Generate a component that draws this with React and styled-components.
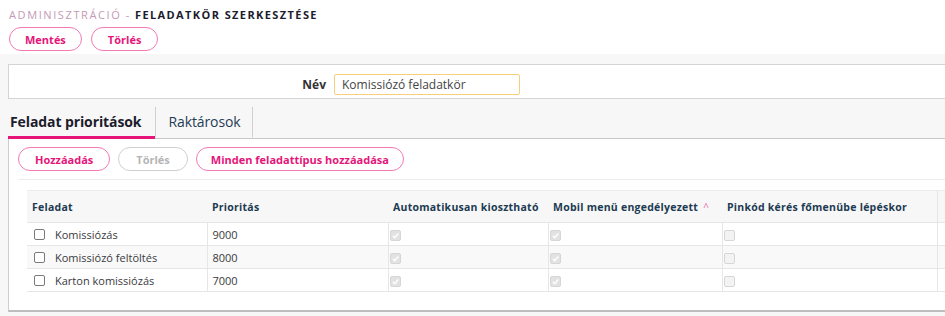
import React from 'react';
import styled, { createGlobalStyle } from 'styled-components';

const GlobalStyle = createGlobalStyle`
  body {
    margin: 0;
    background: #f7f7f7;
    font-family: "Open Sans", "Noto Sans", sans-serif;
    overflow: hidden;
  }
`;

const PINK = '#e5157a';

const Top = styled.header`
  background: #fff;
  height: 54px;
  box-sizing: border-box;
  padding: 8px 9px 0;
`;

const Title = styled.div`
  font-size: 11px;
  line-height: 14px;
  letter-spacing: 1.6px;
  text-transform: uppercase;
  color: #c49ab4;
  white-space: nowrap;
  b {
    color: #1c1c2c;
    font-weight: 700;
    margin-left: 4px;
    letter-spacing: 1.4px;
  }
`;

const ButtonRow = styled.div`
  display: flex;
  gap: ${p => p.$gap ?? 9}px;
  margin-top: ${p => p.$top ?? 5}px;
`;

const PillButton = styled.button`
  height: 24px;
  box-sizing: border-box;
  padding: 0 ${p => p.$pad || 15}px;
  border-radius: 12px;
  border: 1.5px solid ${p => (p.disabled ? '#cfcfcf' : '#f27ab3')};
  background: #fff;
  color: ${p => (p.disabled ? '#b5b5b5' : PINK)};
  font-family: inherit;
  font-size: 11px;
  font-weight: 700;
  cursor: pointer;
`;

const Main = styled.main`
  padding: 10px 0 0 8px;
  margin-right: -30px;
`;

const NamePanel = styled.section`
  background: #fff;
  border: 1px solid #d4d4d4;
  height: 35px;
  box-sizing: border-box;
  padding-top: 9px;
  display: grid;
  grid-template-columns: 317px 186px;
  column-gap: 8px;
  align-items: start;
`;

const Label = styled.label`
  text-align: right;
  font-size: 12px;
  line-height: 21px;
  font-weight: 700;
  color: #333;
`;

const Input = styled.input`
  height: 21px;
  box-sizing: border-box;
  border: 1px solid #f8cf7a;
  border-radius: 2px;
  padding: 0 7px;
  font-family: inherit;
  font-size: 12px;
  color: #444;
  outline: none;
`;

const Tabs = styled.nav`
  display: flex;
  align-items: flex-end;
  height: 39px;
  border-bottom: 1px solid #c8c8c8;
`;

const Tab = styled.div`
  display: flex;
  align-items: center;
  height: 25px;
  margin-bottom: -1px;
  padding: 2px ${p => (p.$first ? 14 : 11)}px 2px ${p => (p.$first ? 2 : 12)}px;
  font-size: 14px;
  letter-spacing: -0.1px;
  font-weight: ${p => (p.$active ? 700 : 400)};
  color: ${p => (p.$active ? '#1c1c2c' : '#1f3d55')};
  border-bottom: 3px solid ${p => (p.$active ? PINK : 'transparent')};
  & + & {
    border-left: 1px solid #cfcfcf;
  }
  &:last-child {
    border-right: 1px solid #cfcfcf;
  }
`;

const Content = styled.section`
  background: #fff;
  border: 1px solid #cdcdcd;
  border-top: none;
  border-bottom: 2px solid #bdbdbd;
  padding: 8px 0 18px 9px;
`;

const Rule = styled.hr`
  border: none;
  border-top: 1px solid #ececec;
  margin: 8px 0 10px;
`;

const Table = styled.table`
  margin-left: 9px;
  border-collapse: collapse;
  table-layout: fixed;
  width: 1010px;
  border-top: 1px solid #ececec;
`;

const Th = styled.th`
  height: 31px;
  background: #f7f7f7;
  text-align: left;
  padding: 0 5px;
  font-size: 10.5px;
  font-weight: 700;
  letter-spacing: 0.25px;
  color: #1d3b52;
  white-space: nowrap;
  border-bottom: 1px solid #e6e6e6;
  & + &:last-child {
    border-left: 1px solid #e6e6e6;
  }
`;

const Caret = styled.span`
  color: #f06aa5;
  font-weight: 400;
  margin-left: 5px;
  font-size: 10px;
`;

const Tr = styled.tr`
  background: ${p => (p.$alt ? '#f9f9f9' : '#fff')};
`;

const Td = styled.td`
  height: 22px;
  padding: 0 ${p => (p.$box ? 1 : 5)}px;
  font-size: 11px;
  color: #3a3a40;
  border-bottom: 1px solid #e6e6e6;
  & + & {
    border-left: 1px solid #e6e6e6;
  }
`;

const Cell = styled.div`
  display: flex;
  align-items: center;
  gap: 10px;
  padding-left: 2px;
`;

const Box = styled.span`
  display: inline-flex;
  align-items: center;
  justify-content: center;
  width: 11px;
  height: 11px;
  box-sizing: border-box;
  border-radius: 2px;
  vertical-align: middle;
  border: 1px solid ${p => (p.$muted ? '#d6d6d6' : '#7a7a7a')};
  background: ${p => (p.$muted ? (p.$checked ? '#e2e2e2' : '#f3f3f3') : '#fff')};
`;

const Check = ({ checked, muted }) => (
  <Box $checked={checked} $muted={muted}>
    {checked && (
      <svg width="9" height="9" viewBox="0 0 10 10">
        <path d="M2 5.2 L4.2 7.4 L8 2.8" fill="none" stroke="#fff" strokeWidth="1.6" />
      </svg>
    )}
  </Box>
);

const rows = [
  { name: 'Komissiózás', prio: 9000 },
  { name: 'Komissiózó feltöltés', prio: 8000 },
  { name: 'Karton komissiózás', prio: 7000 },
];

export default function App() {
  return (
    <>
      <GlobalStyle />
      <Top>
        <Title>
          Adminisztráció -<b>Feladatkör szerkesztése</b>
        </Title>
        <ButtonRow>
          <PillButton $pad={15}>Mentés</PillButton>
          <PillButton $pad={16}>Törlés</PillButton>
        </ButtonRow>
      </Top>
      <Main>
        <NamePanel>
          <Label>Név</Label>
          <Input defaultValue="Komissiózó feladatkör" />
        </NamePanel>
        <Tabs>
          <Tab $first $active>Feladat prioritások</Tab>
          <Tab>Raktárosok</Tab>
        </Tabs>
        <Content>
          <ButtonRow $gap={8} $top={0}>
            <PillButton $pad={16}>Hozzáadás</PillButton>
            <PillButton $pad={17} disabled>Törlés</PillButton>
            <PillButton $pad={14}>Minden feladattípus hozzáadása</PillButton>
          </ButtonRow>
          <Rule />
          <Table>
            <colgroup>
              <col style={{ width: 180 }} />
              <col style={{ width: 181 }} />
              <col style={{ width: 160 }} />
              <col style={{ width: 174 }} />
              <col style={{ width: 215 }} />
              <col />
            </colgroup>
            <thead>
              <tr>
                <Th>Feladat</Th>
                <Th>Prioritás</Th>
                <Th>Automatikusan kiosztható</Th>
                <Th>
                  Mobil menü engedélyezett<Caret>^</Caret>
                </Th>
                <Th>Pinkód kérés főmenübe lépéskor</Th>
                <Th />
              </tr>
            </thead>
            <tbody>
              {rows.map((r, i) => (
                <Tr key={r.name} $alt={i === 1}>
                  <Td>
                    <Cell>
                      <Check />
                      {r.name}
                    </Cell>
                  </Td>
                  <Td>{r.prio}</Td>
                  <Td $box><Check checked muted /></Td>
                  <Td $box><Check checked muted /></Td>
                  <Td $box><Check muted /></Td>
                  <Td />
                </Tr>
              ))}
            </tbody>
          </Table>
        </Content>
      </Main>
    </>
  );
}
